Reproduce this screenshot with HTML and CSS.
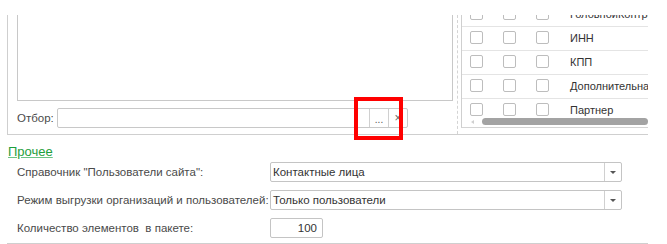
FILE: index.html
```html
<!DOCTYPE html>
<html lang="en">
<head>
    <meta charset="UTF-8">
    <title>Настройки обмена</title>
    <link rel="stylesheet" href="styles.css">
</head>
<body>
    <div class="page">
        <div class="top">
            <div class="left">
                <div class="list-box"></div>
                <div class="filter-row">
                    <span class="label">Отбор:</span>
                    <div class="filter-input">
                        <div class="filter-text"></div>
                        <div class="filter-btn dots">...</div>
                        <div class="filter-btn clear">×</div>
                    </div>
                </div>
            </div>
            <div class="splitter"></div>
            <div class="right">
                <div class="rows">
                    <div class="row"><span class="cb"></span><span class="cb"></span><span class="cb"></span><span class="name">ГоловнойКонтрагент</span></div>
                    <div class="row"><span class="cb"></span><span class="cb"></span><span class="cb"></span><span class="name">ИНН</span></div>
                    <div class="row"><span class="cb"></span><span class="cb"></span><span class="cb"></span><span class="name">КПП</span></div>
                    <div class="row"><span class="cb"></span><span class="cb"></span><span class="cb"></span><span class="name">Дополнительная информация</span></div>
                    <div class="row"><span class="cb"></span><span class="cb"></span><span class="cb"></span><span class="name">Партнер</span></div>
                </div>
                <div class="hscroll">
                    <span class="arrow"></span>
                    <span class="thumb"></span>
                </div>
            </div>
        </div>

        <div class="other">
            <div class="group-title">Прочее</div>
            <div class="form">
                <span class="label">Справочник "Пользователи сайта":</span>
                <div class="select"><span class="value">Контактные лица</span><span class="drop"></span></div>

                <span class="label">Режим выгрузки организаций и пользователей:</span>
                <div class="select"><span class="value">Только пользователи</span><span class="drop"></span></div>

                <span class="label">Количество элементов&nbsp; в пакете:</span>
                <div class="number">100</div>
            </div>
        </div>

        <div class="highlight"></div>
    </div>
</body>
</html>
```

FILE: styles.css
```css
body {
    margin: 0;
    background: #fff;
    font-family: "Liberation Sans", Arial, sans-serif;
    font-size: 11.5px;
    color: #4a4a4a;
    overflow: hidden;
}
.page {
    position: relative;
    width: 641px;
    height: 244px;
    margin-left: 7px;
    overflow: hidden;
}
.top {
    display: flex;
    margin-top: 15px;
    height: 119px;
    border-bottom: 1px solid #cfcfcf;
}
.left {
    width: 450px;
    border-left: 1px solid #cfcfcf;
    padding-left: 9px;
    box-sizing: border-box;
}
.list-box {
    width: 436px;
    height: 86px;
    box-sizing: border-box;
    border: 1px solid #c8c8c8;
    border-top: none;
}
.filter-row {
    display: flex;
    align-items: center;
    margin-top: 7px;
}
.filter-row .label {
    width: 40px;
}
.filter-input {
    display: flex;
    width: 351px;
    height: 20px;
    box-sizing: border-box;
    border: 1px solid #c8c8c8;
    border-radius: 2px;
}
.filter-text {
    flex: 1;
}
.filter-btn {
    width: 18px;
    border-left: 1px solid #d0d0d0;
    display: flex;
    justify-content: center;
    color: #555;
}
.dots {
    align-items: flex-end;
    line-height: 14px;
    font-size: 10px;
}
.clear {
    align-items: center;
    font-size: 12px;
    color: #666;
}
.splitter {
    width: 3px;
    border-left: 1px dashed #d4d4d4;
}
.right {
    position: relative;
    flex: 1;
    height: 112px;
    border-left: 1px solid #cfcfcf;
    border-bottom: 1px solid #d4d4d4;
    overflow: hidden;
}
.rows {
    margin-top: -12px;
}
.row {
    display: flex;
    align-items: flex-start;
    height: 24px;
    box-sizing: border-box;
    padding-top: 4px;
    padding-left: 8px;
    border-bottom: 1px solid #e4e4e4;
    white-space: nowrap;
}
.row:last-child {
    border-bottom: none;
}
.cb {
    flex: none;
    width: 13px;
    height: 13px;
    box-sizing: border-box;
    border: 1px solid #bdbdbd;
    border-radius: 2px;
    margin-right: 20px;
}
.name {
    margin-left: 1px;
    font-size: 11px;
    line-height: 14px;
    color: #333;
}
.hscroll {
    position: absolute;
    left: 0;
    right: 0;
    top: 102px;
    height: 9px;
    display: flex;
    align-items: center;
    background: #fff;
}
.arrow {
    width: 0;
    height: 0;
    margin-left: 9px;
    border-top: 2px solid transparent;
    border-bottom: 2px solid transparent;
    border-right: 3px solid #cfcfcf;
}
.thumb {
    flex: 1;
    height: 7px;
    margin-left: 8px;
    border-radius: 4px;
    background: #a3a3a3;
}
.group-title {
    margin: 9px 0 0 1px;
    font-size: 13px;
    line-height: 16px;
    color: #1e9e3c;
    text-decoration: underline;
    text-decoration-color: #6cc486;
}
.form {
    display: grid;
    grid-template-columns: 253px auto;
    grid-auto-rows: 20px;
    row-gap: 8px;
    align-items: center;
    margin-top: 2px;
    padding-left: 10px;
    padding-bottom: 5px;
    border-bottom: 1px solid #cfcfcf;
}
.select {
    display: flex;
    width: 352px;
    height: 20px;
    box-sizing: border-box;
    border: 1px solid #c4c4c4;
    border-radius: 2px;
    color: #333;
}
.select .value {
    flex: 1;
    padding-left: 2px;
    line-height: 18px;
}
.drop {
    width: 16px;
    border-left: 1px solid #d0d0d0;
    display: flex;
    justify-content: center;
    align-items: center;
}
.drop::after {
    content: "";
    border-left: 3px solid transparent;
    border-right: 3px solid transparent;
    border-top: 3px solid #555;
}
.number {
    width: 53px;
    height: 20px;
    box-sizing: border-box;
    border: 1px solid #c4c4c4;
    border-radius: 2px;
    text-align: right;
    padding-right: 5px;
    line-height: 18px;
    color: #333;
}
.highlight {
    position: absolute;
    left: 347px;
    top: 97px;
    width: 49px;
    height: 43px;
    box-sizing: border-box;
    border: 4px solid #ff0000;
}
```
